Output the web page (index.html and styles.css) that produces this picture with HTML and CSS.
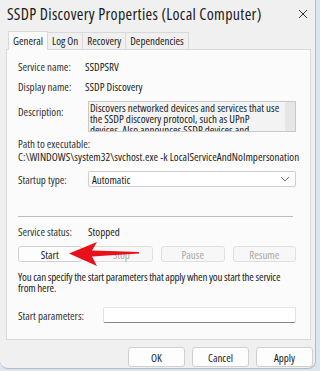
FILE: index.html
```html
<!DOCTYPE html>
<html lang="en">
<head>
  <meta charset="UTF-8">
  <meta name="viewport" content="width=device-width, initial-scale=1.0">
  <title>SSDP Discovery Properties</title>
  <link rel="stylesheet" href="styles.css">
</head>
<body>
  <div class="window">
    <div class="titlebar">
      <span class="title">SSDP Discovery Properties (Local Computer)</span>
      <svg class="close" width="10" height="10" viewBox="0 0 10 10"><path d="M1 1 L9 9 M9 1 L1 9" stroke="#333" stroke-width="1"/></svg>
    </div>
    <div class="tabs">
      <div class="tab active">General</div>
      <div class="tab">Log On</div>
      <div class="tab">Recovery</div>
      <div class="tab">Dependencies</div>
    </div>
    <div class="panel">
      <div class="row">
        <span class="label">Service name:</span>
        <span class="value name">SSDPSRV</span>
      </div>
      <div class="row">
        <span class="label">Display name:</span>
        <span class="value name">SSDP Discovery</span>
      </div>
      <div class="row desc-row">
        <span class="label">Description:</span>
        <div class="desc-box">
          <div class="desc-text">Discovers networked devices and services that use<br>the SSDP discovery protocol, such as UPnP<br>devices. Also announces SSDP devices and<br>services running on the local computer.</div>
          <div class="scrollbar"></div>
        </div>
      </div>
      <div class="path-label">Path to executable:</div>
      <div class="path">C:\WINDOWS\system32\svchost.exe -k LocalServiceAndNoImpersonation</div>
      <div class="row startup-row">
        <span class="label">Startup type:</span>
        <div class="select">
          <span>Automatic</span>
          <svg width="10" height="6" viewBox="0 0 10 6"><path d="M1 1 L5 5 L9 1" fill="none" stroke="#777" stroke-width="1"/></svg>
        </div>
      </div>
      <div class="separator"></div>
      <div class="row status-row">
        <span class="label">Service status:</span>
        <span class="value">Stopped</span>
      </div>
      <div class="svc-buttons">
        <button class="btn">Start</button>
        <button class="btn" disabled>Stop</button>
        <button class="btn" disabled>Pause</button>
        <button class="btn" disabled>Resume</button>
        <svg class="arrow" width="70" height="26" viewBox="0 0 70 26">
          <path d="M0 12.5 L28 1 L23 9.5 L70 11 L70 12.5 L23 15.5 L28 25 Z" fill="#e8101a"/>
        </svg>
      </div>
      <p class="hint">You can specify the start parameters that apply when you start the service from here.</p>
      <div class="row params-row">
        <span class="label">Start parameters:</span>
        <div class="param-input"></div>
      </div>
    </div>
    <div class="footer">
      <button class="btn footer-btn">OK</button>
      <button class="btn footer-btn">Cancel</button>
      <button class="btn footer-btn">Apply</button>
    </div>
  </div>
</body>
</html>
```

FILE: styles.css
```css
body {
  margin: 0;
  background-color: #dbe6f1;
  font-family: "Open Sans", "Liberation Sans", sans-serif;
  font-stretch: 75%;
  font-size: 11px;
  color: #1c1c1c;
}
.window {
  width: 316px;
  height: 369px;
  background-color: #f0f0f0;
  border: 1px solid #b9b9b9;
  border-top: none;
  border-left: none;
  border-radius: 0 0 8px 8px;
  box-sizing: border-box;
  overflow: hidden;
}
.titlebar {
  height: 30px;
  display: flex;
  align-items: center;
  justify-content: space-between;
  padding: 0 7px 2px 7px;
  box-sizing: border-box;
}
.title {
  font-size: 16px;
  letter-spacing: 0.3px;
  color: #1a1a1a;
  white-space: nowrap;
}
.close {
  flex-shrink: 0;
}
.tabs {
  display: flex;
  align-items: flex-end;
  height: 19px;
  margin-left: 8px;
}
.tab {
  height: 16px;
  line-height: 16px;
  padding: 0 4px;
  border: 1px solid #d9d9d9;
  border-bottom: none;
  margin-right: -1px;
  background-color: #f0f0f0;
  white-space: nowrap;
}
.tab.active {
  height: 18px;
  line-height: 17px;
  background-color: #fbfbfb;
  margin-bottom: -1px;
  position: relative;
}
.panel {
  margin: 0 4px 0 6px;
  height: 291px;
  border: 1px solid #d9d9d9;
  background-color: #fbfbfb;
  padding: 6px 14px 0 11px;
  box-sizing: border-box;
}
.row {
  display: flex;
  align-items: center;
  height: 20px;
}
.label {
  width: 70px;
  flex-shrink: 0;
  color: #333;
  white-space: nowrap;
}
.value {
  white-space: nowrap;
}
.value.name {
  margin-left: -3px;
}
.desc-row {
  align-items: flex-start;
  height: 31px;
  margin-top: 5px;
}
.desc-row .label {
  padding-top: 3px;
}
.desc-box {
  display: flex;
  width: 210px;
  height: 31px;
  border: 1px solid #c8c8c8;
  box-sizing: border-box;
  background-color: #f3f3f3;
  overflow: hidden;
}
.desc-text {
  flex: 1;
  padding: 0 1px;
  line-height: 11px;
  white-space: nowrap;
  overflow: hidden;
}
.scrollbar {
  width: 10px;
  background-color: #e6e6e6;
}
.path-label {
  margin-top: 5px;
  line-height: 13px;
  color: #333;
}
.path {
  line-height: 13px;
  white-space: nowrap;
  letter-spacing: 0.05px;
}
.startup-row {
  margin-top: 8px;
  height: 16px;
}
.select {
  width: 210px;
  height: 16px;
  box-sizing: border-box;
  border: 1px solid #cfcfcf;
  border-radius: 2px;
  background-color: #fff;
  display: flex;
  align-items: center;
  justify-content: space-between;
  padding: 0 5px 0 3px;
}
.separator {
  height: 1px;
  background-color: #bdbdbd;
  margin: 29px 3px 0 0;
}
.status-row {
  margin-top: 8px;
  height: 13px;
}
.svc-buttons {
  display: flex;
  gap: 8px;
  margin-top: 8px;
  position: relative;
}
.btn {
  font-family: inherit;
  font-stretch: inherit;
  font-size: 11px;
  color: #1a1a1a;
  background-color: #fdfdfd;
  border: 1px solid #d0d0d0;
  border-radius: 3px;
  height: 16px;
  width: 65px;
  padding: 0;
}
.btn:disabled {
  color: #a8a8a8;
  background-color: #f7f7f7;
  border-color: #e0e0e0;
}
.arrow {
  position: absolute;
  left: 51px;
  top: -5px;
}
.hint {
  margin: 9px 0 0;
  line-height: 11px;
  letter-spacing: -0.2px;
}
.params-row {
  margin-top: 14px;
  height: 16px;
}
.params-row .label {
  width: 85px;
}
.param-input {
  width: 195px;
  height: 16px;
  box-sizing: border-box;
  background-color: #fff;
  border: 1px solid #e2e2e2;
  border-bottom: 1px solid #868686;
  border-radius: 2px;
}
.footer {
  display: flex;
  justify-content: flex-end;
  gap: 7px;
  padding: 7px 2px 0 0;
}
.footer-btn {
  width: 57px;
  height: 20px;
}
```
